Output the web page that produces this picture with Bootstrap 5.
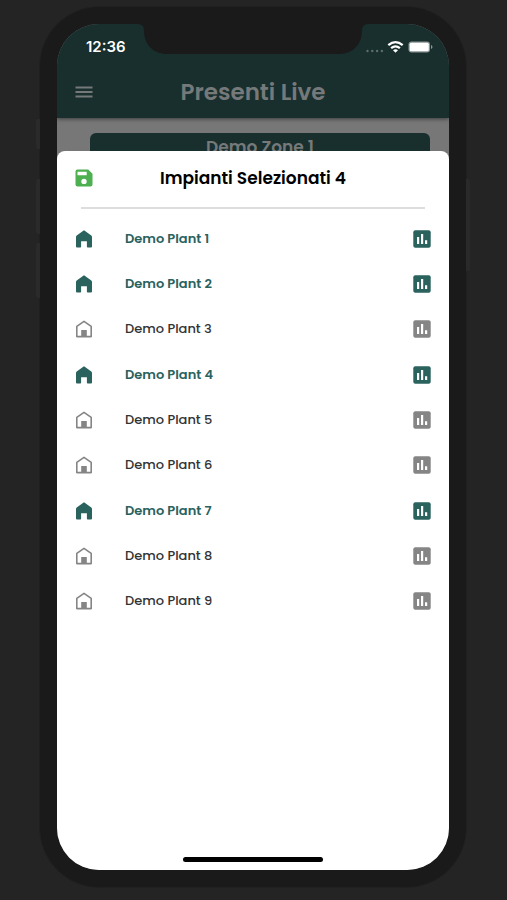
<!DOCTYPE html>
<html lang="it">
<head>
<meta charset="utf-8">
<meta name="viewport" content="width=device-width, initial-scale=1">
<title>Presenti Live</title>
<link href="https://cdn.jsdelivr.net/npm/bootstrap@5.3.0/dist/css/bootstrap.min.css" rel="stylesheet">
<style>
  :root { --brand: #2a625e; --brand-dim: #182f2e; --bezel: #1a1a1a; }
  body { background: #242424; font-family: Poppins, Inter, "Liberation Sans", sans-serif; }
  .stage { min-height: 100vh; padding: 7px 41px 13px 40px; }
  .phone { background: var(--bezel); border-radius: 60px; padding: 17px; box-shadow: 0 0 0 1px #202020; }
  .side-key { width: 4px; background: #2a2a2a; border-radius: 2px 0 0 2px; }
  .key-mute { left: -4px; top: 112px; height: 30px; }
  .key-up { left: -4px; top: 172px; height: 55px; }
  .key-down { left: -4px; top: 236px; height: 55px; }
  .key-power { right: -4px; top: 172px; height: 92px; border-radius: 0 2px 2px 0; }
  .screen { background: #777; border-radius: 42px; }
  .app-head { background: var(--brand-dim); box-shadow: 0 1px 4px rgba(0, 0, 0, .5); z-index: 1; }
  .notch { top: -1px; left: 0; right: 0; }
  .status { height: 46px; padding: 0 16px 0 29px; }
  .clock { font: 600 15px/20px Inter, sans-serif; }
  .app-bar { height: 48px; padding: 0 17px 4px; color: #75797a; }
  .app-title { font-size: 23px; line-height: 28px; font-weight: 600; padding-right: 20px; }
  .bare { border: 0; padding: 0; background: none; color: inherit; line-height: 0; }
  .backdrop-page { height: 44px; padding: 15px 19px 0 33px; }
  .zone { background: var(--brand-dim); color: #75797a; border-radius: 6px 6px 0 0; font-size: 17px; line-height: 28px; font-weight: 600; height: 29px; }
  .sheet { margin-top: -11px; border-radius: 8px 8px 0 0; z-index: 2; color: #161616; }
  .sheet-head { height: 54px; padding: 0 18px; }
  .sheet-title { font-size: 17px; line-height: 24px; font-weight: 600; padding-right: 18px; }
  .rule { margin: 2px 24px 0 24px; border-top: 2px solid #ddd; }
  .plants { grid-auto-rows: 1fr; min-height: 408px; margin-top: 7px; }
  .plant { padding: 0 18px; font-size: 13px; line-height: 20px; font-weight: 500; color: #333; }
  .plant .state { color: #858585; margin-right: 32px; }
  .plant.on, .plant.on .state { color: var(--brand); font-weight: 600; }
  .home-bar { width: 140px; height: 5px; background: #000; border-radius: 3px; margin-bottom: 8px; }
</style>
</head>
<body>
<svg class="d-none" aria-hidden="true">
  <symbol id="home-on" viewBox="0 0 18 18"><path fill="currentColor" d="M9 .3 16.300 5.4q.7.6.7 1.6v9.500q0 1-1 1h-3.300q-.8 0-.8-.8v-5.400H6.100v5.400q0 .8-.8.8H2q-1 0-1-1V7q0-1 .7-1.600Z"/></symbol>
  <symbol id="home-off" viewBox="0 0 18 18"><path fill="none" stroke="currentColor" stroke-width="1.600" stroke-linejoin="round" d="M9 1.400 16.200 6.400v10.200H1.800V6.400Z"/><path fill="currentColor" d="M6.200 10h5.600v6.600H6.200Z"/></symbol>
  <symbol id="chart" viewBox="0 0 18 18"><rect x=".3" y=".3" width="17.400" height="17.400" rx="2" fill="currentColor"/><path fill="#fff" d="M4 7h2.200v7H4ZM8 4h2.200v10H8ZM12 10.300h2.200V14H12Z"/></symbol>
</svg>
<div class="stage d-flex">
  <div class="phone d-flex flex-grow-1 position-relative">
    <span class="side-key key-mute position-absolute"></span>
    <span class="side-key key-up position-absolute"></span>
    <span class="side-key key-down position-absolute"></span>
    <span class="side-key key-power position-absolute"></span>
    <div class="screen d-flex flex-column flex-grow-1 overflow-hidden position-relative">
      <header class="app-head position-relative">
        <div class="notch position-absolute d-flex justify-content-center">
          <svg width="230" height="31" viewBox="0 0 230 31" aria-hidden="true"><path fill="#1a1a1a" d="M0 0h230v1q-6 0-6 7C224 22 214 31 201 31H29C16 31 6 22 6 8Q6 1 0 1Z"/></svg>
        </div>
        <div class="status d-flex justify-content-between align-items-center text-white">
          <span class="clock">12:36</span>
          <svg width="68" height="16" viewBox="0 0 68 16" role="img" aria-label="Wi-Fi, batteria carica">
            <g fill="#5d6e6c"><circle cx="2.500" cy="12" r="1.200"/><circle cx="7.300" cy="12" r="1.200"/><circle cx="12.100" cy="12" r="1.200"/><circle cx="16.900" cy="12" r="1.200"/></g>
            <g fill="none" stroke="#fff" stroke-width="2.200"><path d="M23.300 6.200q7.200-6.200 14.400 0"/><path d="M26.100 9.200q4.400-3.800 8.800 0"/></g>
            <path fill="#fff" d="m28 11.200q2.500-2 5 0l-2.500 2.600Z"/>
            <rect x="43.500" y="2.500" width="21.500" height="11" rx="3" fill="#8b9695"/>
            <rect x="44.700" y="3.700" width="19.100" height="8.600" rx="1.600" fill="#fff"/>
            <path fill="#8b9695" d="M66 6q1.500.4 1.500 2t-1.500 2Z"/>
          </svg>
        </div>
        <div class="app-bar d-flex align-items-center">
          <button class="bare" type="button" aria-label="Menu">
            <svg width="20" height="14" viewBox="0 0 20 14"><path stroke="currentColor" stroke-width="1.800" d="M1.500 2.500h17M1.500 7h17M1.500 11.500h17"/></svg>
          </button>
          <h1 class="app-title flex-grow-1 text-center mb-0">Presenti Live</h1>
        </div>
      </header>
      <div class="backdrop-page">
        <div class="zone text-center overflow-hidden">Demo Zone 1</div>
      </div>
      <main class="sheet bg-white position-relative flex-grow-1 d-flex flex-column" role="dialog" aria-labelledby="sheet-title">
        <div class="sheet-head d-flex align-items-center">
          <button class="bare" type="button" aria-label="Salva">
            <svg width="18" height="18" viewBox="0 0 18 18"><path fill="#4caf50" fill-rule="evenodd" d="M2.500.5h10.700L17.500 4.800v10.700q0 2-2 2h-13q-2 0-2-2v-13q0-2 2-2ZM2.500 2.800v3.400h9.200V2.800ZM9 9.700a2.700 2.700 0 1 0 0 5.400 2.700 2.700 0 0 0 0-5.400Z"/></svg>
          </button>
          <h2 id="sheet-title" class="sheet-title flex-grow-1 text-center mb-0 text-black">Impianti Selezionati 4</h2>
        </div>
        <div class="rule"></div>
        <ul class="plants list-unstyled d-grid mb-4">
          <li class="plant on d-flex align-items-center"><button class="bare state" type="button" aria-label="Deseleziona Demo Plant 1"><svg width="18" height="18"><use href="#home-on"/></svg></button><span class="flex-grow-1">Demo Plant 1</span><button class="bare state me-0" type="button" aria-label="Grafico Demo Plant 1"><svg width="18" height="18"><use href="#chart"/></svg></button></li>
          <li class="plant on d-flex align-items-center"><button class="bare state" type="button" aria-label="Deseleziona Demo Plant 2"><svg width="18" height="18"><use href="#home-on"/></svg></button><span class="flex-grow-1">Demo Plant 2</span><button class="bare state me-0" type="button" aria-label="Grafico Demo Plant 2"><svg width="18" height="18"><use href="#chart"/></svg></button></li>
          <li class="plant d-flex align-items-center"><button class="bare state" type="button" aria-label="Seleziona Demo Plant 3"><svg width="18" height="18"><use href="#home-off"/></svg></button><span class="flex-grow-1">Demo Plant 3</span><button class="bare state me-0" type="button" aria-label="Grafico Demo Plant 3"><svg width="18" height="18"><use href="#chart"/></svg></button></li>
          <li class="plant on d-flex align-items-center"><button class="bare state" type="button" aria-label="Deseleziona Demo Plant 4"><svg width="18" height="18"><use href="#home-on"/></svg></button><span class="flex-grow-1">Demo Plant 4</span><button class="bare state me-0" type="button" aria-label="Grafico Demo Plant 4"><svg width="18" height="18"><use href="#chart"/></svg></button></li>
          <li class="plant d-flex align-items-center"><button class="bare state" type="button" aria-label="Seleziona Demo Plant 5"><svg width="18" height="18"><use href="#home-off"/></svg></button><span class="flex-grow-1">Demo Plant 5</span><button class="bare state me-0" type="button" aria-label="Grafico Demo Plant 5"><svg width="18" height="18"><use href="#chart"/></svg></button></li>
          <li class="plant d-flex align-items-center"><button class="bare state" type="button" aria-label="Seleziona Demo Plant 6"><svg width="18" height="18"><use href="#home-off"/></svg></button><span class="flex-grow-1">Demo Plant 6</span><button class="bare state me-0" type="button" aria-label="Grafico Demo Plant 6"><svg width="18" height="18"><use href="#chart"/></svg></button></li>
          <li class="plant on d-flex align-items-center"><button class="bare state" type="button" aria-label="Deseleziona Demo Plant 7"><svg width="18" height="18"><use href="#home-on"/></svg></button><span class="flex-grow-1">Demo Plant 7</span><button class="bare state me-0" type="button" aria-label="Grafico Demo Plant 7"><svg width="18" height="18"><use href="#chart"/></svg></button></li>
          <li class="plant d-flex align-items-center"><button class="bare state" type="button" aria-label="Seleziona Demo Plant 8"><svg width="18" height="18"><use href="#home-off"/></svg></button><span class="flex-grow-1">Demo Plant 8</span><button class="bare state me-0" type="button" aria-label="Grafico Demo Plant 8"><svg width="18" height="18"><use href="#chart"/></svg></button></li>
          <li class="plant d-flex align-items-center"><button class="bare state" type="button" aria-label="Seleziona Demo Plant 9"><svg width="18" height="18"><use href="#home-off"/></svg></button><span class="flex-grow-1">Demo Plant 9</span><button class="bare state me-0" type="button" aria-label="Grafico Demo Plant 9"><svg width="18" height="18"><use href="#chart"/></svg></button></li>
        </ul>
        <div class="home-bar mt-auto mx-auto"></div>
      </main>
    </div>
  </div>
</div>
<script src="https://cdn.jsdelivr.net/npm/bootstrap@5.3.0/dist/js/bootstrap.bundle.min.js"></script>
</body>
</html>
